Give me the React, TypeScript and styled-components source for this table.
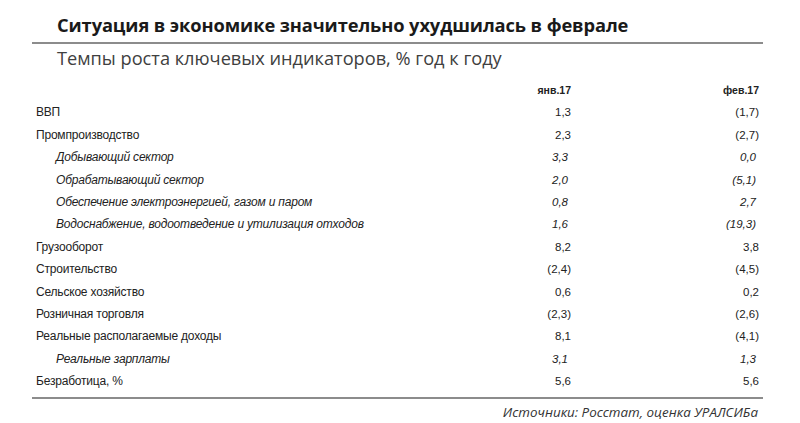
import React from "react";
import styled, { createGlobalStyle } from "styled-components";

const Global = createGlobalStyle`
  html, body { margin: 0; padding: 0; background: #fff; }
  body { width: 800px; height: 423px; overflow: hidden; }
`;

const Page = styled.div`
  padding: 0 37px 0 32px;
  display: flex;
  flex-direction: column;
`;

const Title = styled.h1`
  margin: 0;
  padding: 13px 0 0 25px;
  height: 29px;
  font-family: "Open Sans", sans-serif;
  font-weight: 700;
  font-size: 18.3px;
  line-height: 24px;
  color: #1a1a1a;
  letter-spacing: -0.1px;
  border-bottom: 2px solid #8c8c8c;
  box-sizing: content-box;
`;

const Subtitle = styled.h2`
  margin: 0;
  padding: 2px 0 0 25px;
  font-family: "Open Sans", sans-serif;
  font-weight: 400;
  font-size: 18.2px;
  line-height: 24px;
  color: #404040;
`;

const Table = styled.div`
  display: grid;
  grid-template-columns: 1fr 100px 188px;
  padding: 9px 4px 0 4px;
  font-family: "Liberation Sans", Arial, sans-serif;
  color: #222;
`;

const Cell = styled.div<{ $italic?: boolean; $indent?: boolean; $num?: boolean; $head?: boolean }>`
  height: 22.42px;
  line-height: 22.42px;
  font-size: ${(p) => (p.$head ? "10.5px" : p.$num ? "11.5px" : "12px")};
  font-weight: ${(p) => (p.$head ? 700 : 400)};
  font-style: ${(p) => (p.$italic ? "italic" : "normal")};
  text-align: ${(p) => (p.$num ? "right" : "left")};
  padding-left: ${(p) => (p.$indent ? "20px" : "0")};
  padding-right: ${(p) => (p.$num && p.$italic ? "3px" : "0")};
  letter-spacing: ${(p) => (p.$num ? "0" : "-0.2px")};
  white-space: nowrap;
`;

const Row = styled.div`
  display: contents;
`;

const Footer = styled.div`
  margin-top: 4px;
  border-top: 2px solid #8c8c8c;
  padding: 3px 5px 0 0;
  text-align: right;
  font-family: "Open Sans", sans-serif;
  font-style: italic;
  font-size: 13.4px;
  line-height: 20px;
  color: #333;
`;

type RowData = { label: string; a: string; b: string; sub?: boolean };

const rows: RowData[] = [
  { label: "ВВП", a: "1,3", b: "(1,7)" },
  { label: "Промпроизводство", a: "2,3", b: "(2,7)" },
  { label: "Добывающий сектор", a: "3,3", b: "0,0", sub: true },
  { label: "Обрабатывающий сектор", a: "2,0", b: "(5,1)", sub: true },
  { label: "Обеспечение электроэнергией, газом и паром", a: "0,8", b: "2,7", sub: true },
  { label: "Водоснабжение, водоотведение и утилизация отходов", a: "1,6", b: "(19,3)", sub: true },
  { label: "Грузооборот", a: "8,2", b: "3,8" },
  { label: "Строительство", a: "(2,4)", b: "(4,5)" },
  { label: "Сельское хозяйство", a: "0,6", b: "0,2" },
  { label: "Розничная торговля", a: "(2,3)", b: "(2,6)" },
  { label: "Реальные располагаемые доходы", a: "8,1", b: "(4,1)" },
  { label: "Реальные зарплаты", a: "3,1", b: "1,3", sub: true },
  { label: "Безработица, %", a: "5,6", b: "5,6" },
];

export default function App() {
  return (
    <>
      <Global />
      <Page>
        <Title>Ситуация в экономике значительно ухудшилась в феврале</Title>
        <Subtitle>Темпы роста ключевых индикаторов, % год к году</Subtitle>
        <Table>
          <Row>
            <Cell $head />
            <Cell $head $num>янв.17</Cell>
            <Cell $head $num>фев.17</Cell>
          </Row>
          {rows.map((r) => (
            <Row key={r.label}>
              <Cell $italic={r.sub} $indent={r.sub}>{r.label}</Cell>
              <Cell $num $italic={r.sub}>{r.a}</Cell>
              <Cell $num $italic={r.sub}>{r.b}</Cell>
            </Row>
          ))}
        </Table>
        <Footer>Источники: Росстат, оценка УРАЛСИБа</Footer>
      </Page>
    </>
  );
}
